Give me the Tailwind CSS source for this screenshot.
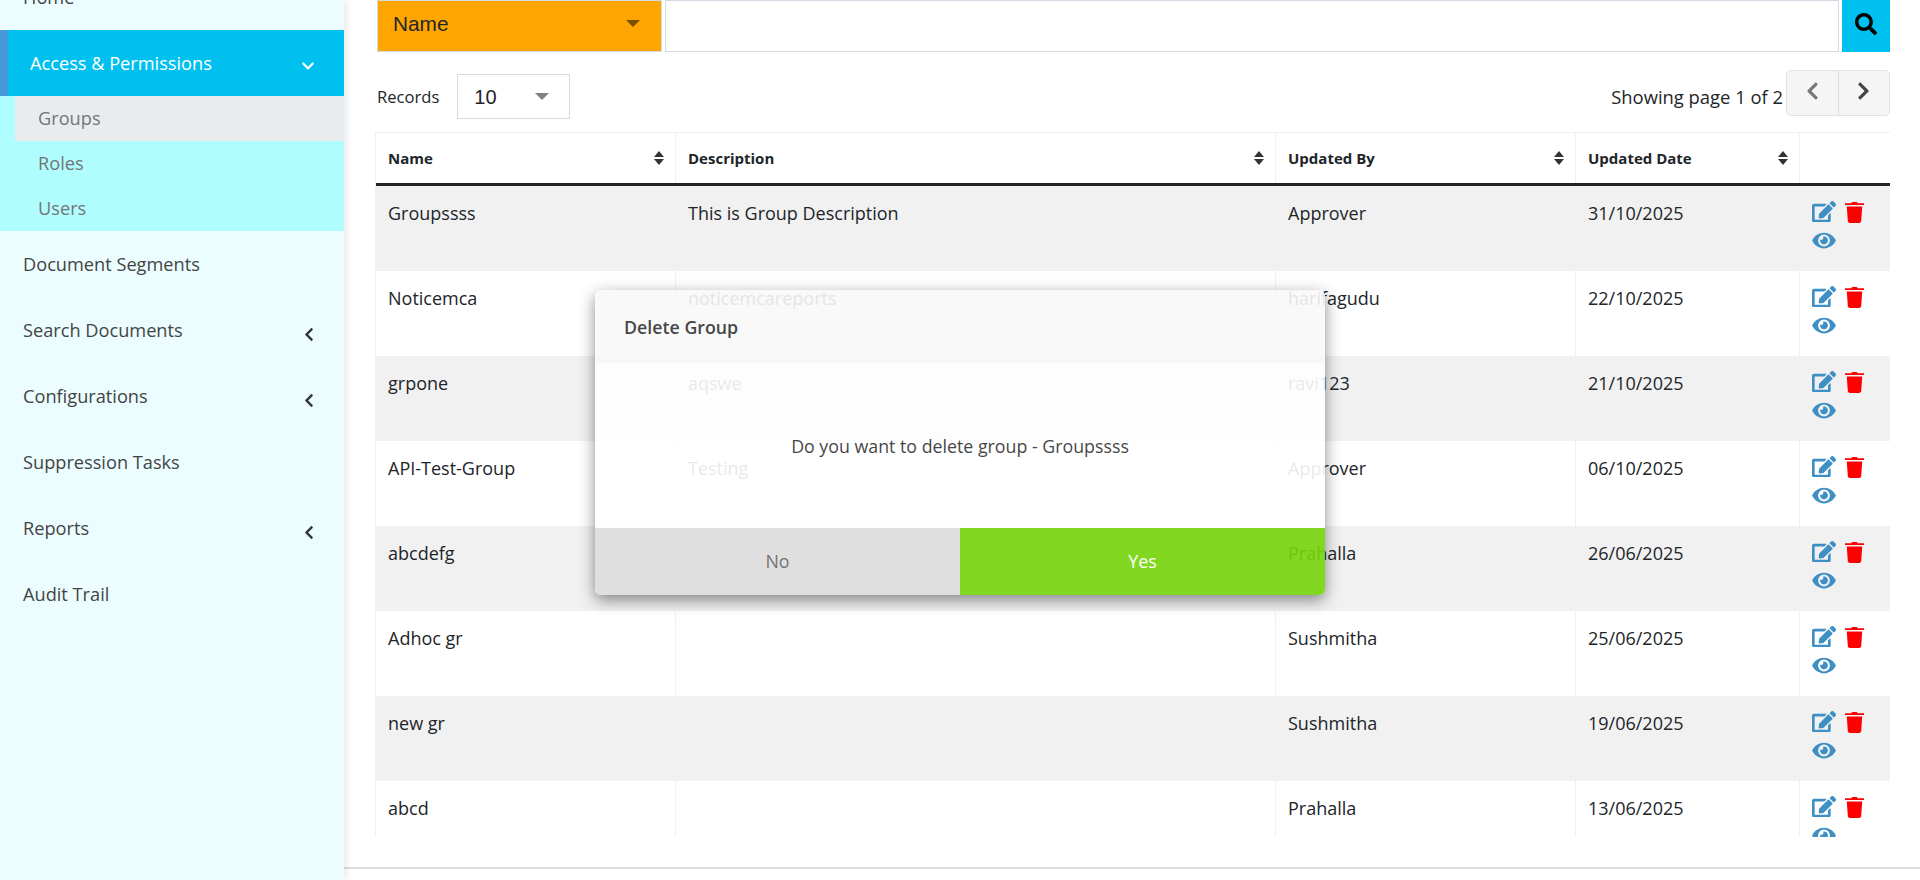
<!DOCTYPE html>
<html lang="en">
<head>
  <meta charset="UTF-8">
  <meta name="viewport" content="width=device-width, initial-scale=1">
  <title>Groups</title>
  <script src="https://cdn.jsdelivr.net/npm/@tailwindcss/browser@4"></script>
</head>
<body class="h-[880px] overflow-hidden bg-white font-['Open_Sans',sans-serif] text-[18px] text-[#212529]">
  <div class="relative flex h-[880px]">
    <!-- sidebar -->
    <aside class="z-10 h-full w-[344px] shrink-0 bg-[#ebfdff] text-[18.2px] shadow-[3px_0_6px_rgba(0,0,0,0.08)]">
      <nav class="-mt-[35px] text-[#444]">
        <a class="flex h-[65px] items-center pl-[23px]">Home</a>
        <a class="flex h-[66px] items-center justify-between border-l-[8px] border-[#4499d8] bg-[#00c0f0] pl-[22px] pr-[29px] text-white">
          <span class="mt-[1px]">Access &amp; Permissions</span>
          <svg class="mt-[6px] h-[14px] w-[14px] fill-white" viewBox="0 0 448 512"><path d="M207.029 381.476L12.686 187.132c-9.373-9.373-9.373-24.569 0-33.941l22.667-22.667c9.357-9.357 24.522-9.373 33.901-.04L224 284.505l154.745-154.021c9.379-9.333 24.544-9.317 33.901.04l22.667 22.667c9.373 9.373 9.373 24.569 0 33.941L240.971 381.476c-9.373 9.372-24.569 9.372-33.942 0z"/></svg>
        </a>
        <div class="bg-[#b0fdff] pl-[15px] text-[#757575]">
          <a class="flex h-[45px] items-center bg-[#e9ecef] pl-[23px] pt-[1px]">Groups</a>
          <a class="flex h-[45px] items-center pl-[23px] pt-[1px]">Roles</a>
          <a class="flex h-[45px] items-center pl-[23px] pt-[1px]">Users</a>
        </div>
        <a class="flex h-[66px] items-center pl-[23px] pt-[1px]">Document Segments</a>
        <a class="flex h-[66px] items-center justify-between pl-[23px] pr-[30px] pt-[2px]">Search Documents
          <svg class="mt-[6px] h-[15px] w-[10px] fill-[#333]" viewBox="0 0 320 512"><path d="M34.52 239.03L228.87 44.69c9.37-9.37 24.57-9.37 33.94 0l22.67 22.67c9.36 9.36 9.37 24.52.04 33.9L131.49 256l154.02 154.75c9.34 9.38 9.32 24.54-.04 33.9l-22.67 22.67c-9.37 9.37-24.57 9.37-33.94 0L34.52 272.97c-9.37-9.37-9.37-24.57 0-33.94z"/></svg>
        </a>
        <a class="flex h-[66px] items-center justify-between pl-[23px] pr-[30px] pt-[2px]">Configurations
          <svg class="mt-[6px] h-[15px] w-[10px] fill-[#333]" viewBox="0 0 320 512"><path d="M34.52 239.03L228.87 44.69c9.37-9.37 24.57-9.37 33.94 0l22.67 22.67c9.36 9.36 9.37 24.52.04 33.9L131.49 256l154.02 154.75c9.34 9.38 9.32 24.54-.04 33.9l-22.67 22.67c-9.37 9.37-24.57 9.37-33.94 0L34.52 272.97c-9.37-9.37-9.37-24.57 0-33.94z"/></svg>
        </a>
        <a class="flex h-[66px] items-center pl-[23px] pt-[2px]">Suppression Tasks</a>
        <a class="flex h-[66px] items-center justify-between pl-[23px] pr-[30px] pt-[2px]">Reports
          <svg class="mt-[6px] h-[15px] w-[10px] fill-[#333]" viewBox="0 0 320 512"><path d="M34.52 239.03L228.87 44.69c9.37-9.37 24.57-9.37 33.94 0l22.67 22.67c9.36 9.36 9.37 24.52.04 33.9L131.49 256l154.02 154.75c9.34 9.38 9.32 24.54-.04 33.9l-22.67 22.67c-9.37 9.37-24.57 9.37-33.94 0L34.52 272.97c-9.37-9.37-9.37-24.57 0-33.94z"/></svg>
        </a>
        <a class="flex h-[66px] items-center pl-[23px] pt-[2px]">Audit Trail</a>
      </nav>
    </aside>

    <!-- main -->
    <main class="flex h-full min-w-0 flex-1 flex-col pl-[31px] pr-[30px]">
      <div class="flex h-[52px] pl-[2px]">
        <div class="flex w-[285px] items-center justify-between border border-[#d3dae3] bg-[#ffa500] pb-[5px] pl-[15px] pr-[21px] font-['Liberation_Sans',sans-serif] text-[20.8px]">
          Name
          <span class="h-0 w-0 border-x-[7px] border-t-[7px] border-x-transparent border-t-[#7a5000]"></span>
        </div>
        <div class="ml-[3px] flex-1 border border-[#d3dae3] bg-white"></div>
        <button class="ml-[3px] flex w-[48px] items-center justify-center bg-[#00c0f0] pb-[4px]">
          <svg class="h-[22px] w-[22px]" viewBox="0 0 512 512"><path d="M505 442.7L405.3 343c-4.5-4.5-10.6-7-17-7H372c27.6-35.3 44-79.7 44-128C416 93.1 322.9 0 208 0S0 93.1 0 208s93.1 208 208 208c48.3 0 92.7-16.4 128-44v16.3c0 6.4 2.5 12.5 7 17l99.7 99.7c9.4 9.4 24.6 9.4 33.9 0l28.3-28.3c9.4-9.4 9.4-24.6.1-34zM208 336c-70.7 0-128-57.2-128-128 0-70.7 57.2-128 128-128 70.7 0 128 57.2 128 128 0 70.7-57.2 128-128 128z"/></svg>
        </button>
      </div>

      <div class="mt-[18px] flex h-[48px] items-start pl-[2px]">
        <span class="mt-[15px] text-[16.6px]">Records</span>
        <div class="ml-[18px] mt-[4px] flex h-[45px] w-[113px] items-center justify-between border border-[#d3dae3] pl-[16px] pr-[20px] font-['Liberation_Sans',sans-serif] text-[20px]">
          10
          <span class="h-0 w-0 border-x-[7px] border-t-[7px] border-x-transparent border-t-[#808080]"></span>
        </div>
        <span class="ml-auto mt-[13px] text-[18.4px]">Showing page 1 of 2</span>
        <div class="ml-[3px] flex h-[46px] w-[104px] rounded-[5px] border border-[#e2e2e2] bg-[#f5f5f5]">
          <button class="flex flex-1 items-center justify-center border-r border-[#ddd] pb-[4px]">
            <svg class="h-[20px] w-[13px] fill-[#777]" viewBox="0 0 320 512"><path d="M34.52 239.03L228.87 44.69c9.37-9.37 24.57-9.37 33.94 0l22.67 22.67c9.36 9.36 9.37 24.52.04 33.9L131.49 256l154.02 154.75c9.34 9.38 9.32 24.54-.04 33.9l-22.67 22.67c-9.37 9.37-24.57 9.37-33.94 0L34.52 272.97c-9.37-9.37-9.37-24.57 0-33.94z"/></svg>
          </button>
          <button class="flex flex-1 items-center justify-center pb-[4px]">
            <svg class="h-[20px] w-[13px] fill-[#444]" viewBox="0 0 320 512"><path d="M285.476 272.971L91.132 467.314c-9.373 9.373-24.569 9.373-33.941 0l-22.667-22.667c-9.357-9.357-9.373-24.522-.04-33.901L188.505 256 34.484 101.255c-9.333-9.379-9.317-24.544.04-33.901l22.667-22.667c9.373-9.373 24.569-9.373 33.941 0L285.475 239.03c9.373 9.372 9.373 24.568.001 33.941z"/></svg>
          </button>
        </div>
      </div>

      <div class="mt-[14px] h-[705px] overflow-hidden">
        <table class="w-[1515px] table-fixed border-collapse">
          <colgroup>
            <col class="w-[300px]"><col class="w-[600px]"><col class="w-[300px]"><col class="w-[224px]"><col class="w-[91px]">
          </colgroup>
          <thead>
            <tr class="h-[50px] border-t border-[#f0f0f0] text-left text-[15px] font-bold">
              <th class="border-x border-[#f0f0f0] pl-[12px] pr-[10px]"><div class="flex items-center justify-between">Name<svg class="h-[16px] w-[12px] fill-[#333]" viewBox="0 0 12 16"><path d="M6 1l5 6H1zM6 15L1 9h10z"/></svg></div></th>
              <th class="border-x border-[#f0f0f0] pl-[12px] pr-[10px]"><div class="flex items-center justify-between">Description<svg class="h-[16px] w-[12px] fill-[#333]" viewBox="0 0 12 16"><path d="M6 1l5 6H1zM6 15L1 9h10z"/></svg></div></th>
              <th class="border-x border-[#f0f0f0] pl-[12px] pr-[10px]"><div class="flex items-center justify-between">Updated By<svg class="h-[16px] w-[12px] fill-[#333]" viewBox="0 0 12 16"><path d="M6 1l5 6H1zM6 15L1 9h10z"/></svg></div></th>
              <th class="border-x border-[#f0f0f0] pl-[12px] pr-[10px]"><div class="flex items-center justify-between">Updated Date<svg class="h-[16px] w-[12px] fill-[#333]" viewBox="0 0 12 16"><path d="M6 1l5 6H1zM6 15L1 9h10z"/></svg></div></th>
              <th class="border-x border-[#f0f0f0]"></th>
            </tr>
            <tr class="h-[3px] bg-[#212529]"><th colspan="5" class="p-0"></th></tr>
          </thead>
          <tbody id="rows"></tbody>
        </table>
      </div>
      <div class="mt-[30px] -ml-[31px] -mr-[30px] border-t-2 border-[#dcdce2]"></div>
    </main>

    <!-- delete dialog -->
    <div class="absolute left-[595px] top-[290px] z-20 flex h-[305px] w-[730px] flex-col overflow-hidden rounded-[6px] bg-white text-[17.8px] opacity-90 shadow-[0_5px_15px_rgba(0,0,0,0.5)]">
      <div class="flex h-[73px] items-center bg-[#f9f9f9] pl-[29px] pt-[1px] font-semibold text-[#333]">Delete Group</div>
      <div class="flex flex-1 items-center justify-center pt-[1px] text-[#333]">Do you want to delete group - Groupssss</div>
      <div class="flex h-[67px] text-center">
        <button class="flex-1 bg-[#dedede] text-[#666]">No</button>
        <button class="flex-1 bg-[#77d60a] text-white">Yes</button>
      </div>
    </div>
  </div>

  <script>
    const groups = [
      ["Groupssss", "This is Group Description", "Approver", "31/10/2025"],
      ["Noticemca", "noticemcareports", "harifagudu", "22/10/2025"],
      ["grpone", "aqswe", "ravi123", "21/10/2025"],
      ["API-Test-Group", "Testing", "Approver", "06/10/2025"],
      ["abcdefg", "", "Prahalla", "26/06/2025"],
      ["Adhoc gr", "", "Sushmitha", "25/06/2025"],
      ["new gr", "", "Sushmitha", "19/06/2025"],
      ["abcd", "", "Prahalla", "13/06/2025"]
    ];

    const icons = `
      <div class="flex items-center gap-[9px] pt-[1px]">
        <svg class="h-[21.5px] w-[24px] fill-[#3d8fc4]" viewBox="0 0 576 512"><path d="M402.6 83.2l90.2 90.2c3.8 3.8 3.8 10 0 13.8L274.4 405.6l-92.8 10.3c-12.4 1.4-22.9-9.1-21.5-21.5l10.3-92.8L388.8 83.2c3.8-3.8 10-3.8 13.8 0zm162-22.9l-48.8-48.8c-15.2-15.2-39.9-15.2-55.2 0l-35.4 35.4c-3.8 3.8-3.8 10 0 13.8l90.2 90.2c3.8 3.8 10 3.8 13.8 0l35.4-35.4c15.2-15.3 15.2-40 0-55.2zM384 346.2V448H64V128h229.8c3.2 0 6.2-1.3 8.5-3.5l40-40c7.6-7.6 2.2-20.5-8.5-20.5H48C21.5 64 0 85.5 0 112v352c0 26.5 21.5 48 48 48h352c26.5 0 48-21.5 48-48V306.2c0-10.7-12.9-16-20.5-8.5l-40 40c-2.2 2.3-3.5 5.3-3.5 8.5z"/></svg>
        <svg class="h-[22px] w-[19px] fill-[#ff0000]" viewBox="0 0 19 22"><path d="M6.5 2.2c0-.7.6-1.2 1.2-1.2h3.6c.6 0 1.2.5 1.2 1.2H19v1.8H0V2.2zM1.8 5.5h15.4l-1 14.6c-.1 1-.9 1.9-2 1.9H4.800c-1.100 0-1.900-.9-2-1.900z"/></svg>
      </div>
      <svg class="mt-[7px] h-[21px] w-[24px] fill-[#3d8fc4]" viewBox="0 0 576 512"><path d="M572.52 241.4C518.29 135.59 410.93 64 288 64S57.68 135.64 3.48 241.41a32.35 32.35 0 0 0 0 29.19C57.71 376.41 165.07 448 288 448s230.32-71.64 284.52-177.41a32.35 32.35 0 0 0 0-29.19zM288 400a144 144 0 1 1 144-144 143.93 143.93 0 0 1-144 144zm0-240a95.31 95.31 0 0 0-25.31 3.79 47.85 47.85 0 0 1-66.9 66.9A95.78 95.78 0 1 0 288 160z"/></svg>`;

    document.getElementById("rows").innerHTML = groups.map((g, i) => `
      <tr class="h-[85px] align-top ${i % 2 == 0 ? "bg-[#f1f1f1]" : "bg-white"}">
        <td class="border-x border-[#f0f0f0] pl-[12px] pt-[14px]">${g[0]}</td>
        <td class="border-x border-[#f0f0f0] pl-[12px] pt-[14px]">${g[1]}</td>
        <td class="border-x border-[#f0f0f0] pl-[12px] pt-[14px]">${g[2]}</td>
        <td class="border-x border-[#f0f0f0] pl-[12px] pt-[14px]">${g[3]}</td>
        <td class="border-x border-[#f0f0f0] pl-[12px] pt-[14px]">${icons}</td>
      </tr>`).join("");
  </script>
</body>
</html>
